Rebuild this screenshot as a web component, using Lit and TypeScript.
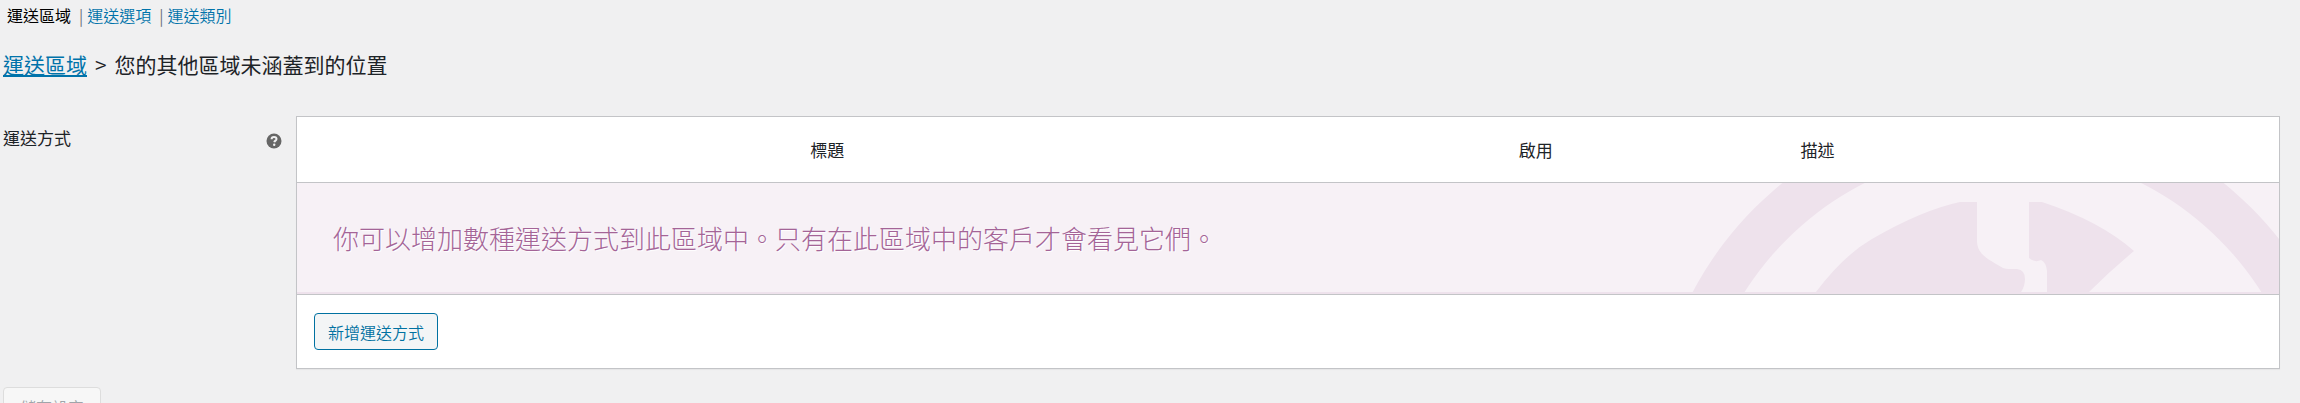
import { LitElement, html, css } from "lit";
import { customElement } from "lit/decorators.js";

@customElement("app-root")
export class AppRoot extends LitElement {
  static styles = css`
    :host {
      display: block;
      min-height: 100vh;
      box-sizing: border-box;
      padding: 3px 20px 0 3px;
      overflow: hidden;
      background: #f0f0f1;
      color: #1d2327;
      font-family: "Noto Sans CJK TC", sans-serif;
      font-size: 16px;
      line-height: 24px;
    }
    .tabs {
      display: flex;
      list-style: none;
      margin: 0;
      padding: 0 0 0 4px;
      font-weight: 350;
    }
    .tabs li + li::before {
      content: "|";
      color: #646970;
      padding: 0 4px 0 8px;
    }
    a {
      color: #0073aa;
    }
    .tabs a {
      text-decoration: none;
    }
    .tabs .current {
      color: #000;
      font-weight: 400;
    }
    h2 {
      margin: 19px 0 34px;
      font-size: 21px;
      line-height: 36px;
      font-weight: 400;
    }
    .crumb {
      margin: 0 8px;
      font-weight: 350;
    }
    .row {
      display: grid;
      grid-template-columns: 293px 1fr;
    }
    .label {
      display: flex;
      justify-content: space-between;
      align-items: flex-start;
      padding: 10px 14px 0 0;
      font-size: 17px;
    }
    .tip {
      width: 16px;
      height: 16px;
      margin-top: 7px;
    }
    table {
      width: 100%;
      border: 1px solid #c3c4c7;
      border-spacing: 0;
      background: #fff;
      box-shadow: 0 1px 1px rgba(0, 0, 0, 0.04);
      table-layout: fixed;
    }
    th,
    td {
      padding: 0;
    }
    th {
      box-sizing: border-box;
      height: 66px;
      padding: 0 17px;
      font-size: 17px;
      font-weight: 400;
      border-bottom: 1px solid #c3c4c7;
    }
    .sort {
      width: 3.5%;
    }
    .title {
      width: 46.5%;
    }
    .enabled {
      width: 25%;
    }
    .desc {
      text-align: left;
    }
    .banner {
      display: grid;
      align-items: center;
      height: 109px;
      overflow: hidden;
      background: #f7f1f6;
      border-bottom: 2px solid #eee2ec;
    }
    .banner > * {
      grid-area: 1 / 1;
    }
    .banner p {
      margin: 0;
      padding-left: 36px;
      font-size: 26px;
      line-height: 40px;
      font-weight: 300;
      color: #a46497;
      text-shadow: 1px 1px 1px #fff;
    }
    .art {
      justify-self: end;
      width: 619px;
      height: 109px;
      fill: #eee2ec;
    }
    .foot {
      padding: 18px 17px;
      border-top: 1px solid #c3c4c7;
    }
    button {
      display: block;
      font: inherit;
      font-weight: 350;
      border-radius: 4px;
      height: 37px;
      padding: 0 13px;
    }
    .add {
      color: #0071a1;
      border: 1px solid #0071a1;
      background: #f3f5f6;
    }
    .save {
      height: 40px;
      margin-top: 18px;
      padding: 0 16px;
      color: #a0a5aa;
      border: 1px solid #ddd;
      background: #f7f7f7;
    }
  `;

  render() {
    return html`
      <ul class="tabs">
        <li><a class="current" href="#zones">運送區域</a></li>
        <li><a href="#options">運送選項</a></li>
        <li><a href="#classes">運送類別</a></li>
      </ul>
      <h2><a href="#zones">運送區域</a><span class="crumb">&gt;</span>您的其他區域未涵蓋到的位置</h2>
      <div class="row">
        <div class="label">
          <span id="methods">運送方式</span>
          <svg class="tip" viewBox="0 0 16 16" aria-hidden="true">
            <circle cx="8" cy="8" r="7.5" fill="#666" />
            <path d="M5.6 6.2C5.6 4.7 6.6 3.9 8 3.9s2.5.8 2.5 2.1c0 1.6-1.9 1.6-2.2 3.2" fill="none" stroke="#f0f0f1" stroke-width="2" />
            <circle cx="8.2" cy="11.7" r="1.2" fill="#f0f0f1" />
          </svg>
        </div>
        <table aria-labelledby="methods">
          <thead>
            <tr>
              <th class="sort"></th>
              <th class="title">標題</th>
              <th class="enabled">啟用</th>
              <th class="desc">描述</th>
            </tr>
          </thead>
          <tbody>
            <tr>
              <td colspan="4">
                <div class="banner">
                  <svg class="art" viewBox="0 0 619 109" aria-hidden="true">
                    <path
                      fill-rule="evenodd"
                      d="M343-78a351 351 0 1 0 .1 0zM343-33a306 306 0 1 1-.1 0z"
                    />
                    <path d="M156 109Q184 72 212 56Q262 27 300 19H317V59C318 72 328 76 343 85Q346 86 349 86H357Q365 87 365 96Q365 103 361 109z" />
                    <path d="M369 19H382Q440 38 474 68Q450 88 429 109H387V88Q386 79 381 77Q375 80 369 75z" />
                  </svg>
                  <p>你可以增加數種運送方式到此區域中。只有在此區域中的客戶才會看見它們。</p>
                </div>
              </td>
            </tr>
          </tbody>
          <tfoot>
            <tr>
              <td class="foot" colspan="4"><button class="add" type="button">新增運送方式</button></td>
            </tr>
          </tfoot>
        </table>
      </div>
      <button class="save" type="submit" disabled>儲存設定</button>
    `;
  }
}
